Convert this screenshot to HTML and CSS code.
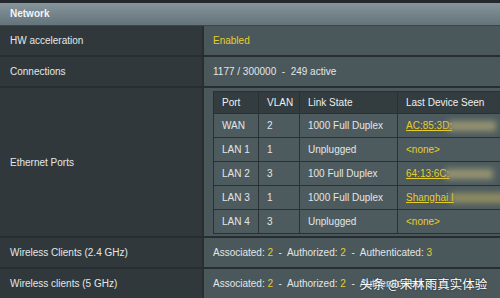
FILE: index.html
```html
<!DOCTYPE html>
<html lang="en">
<head>
    <meta charset="UTF-8">
    <title>Network</title>
    <link rel="stylesheet" href="styles.css">
</head>
<body>
    <div class="panel">
        <div class="top-strip"></div>
        <div class="section-head">Network</div>

        <div class="row">
            <div class="label">HW acceleration</div>
            <div class="value"><span class="hl">Enabled</span></div>
        </div>

        <div class="row">
            <div class="label">Connections</div>
            <div class="value"><span>1177 / 300000 &nbsp;-&nbsp; 249 active</span></div>
        </div>

        <div class="row row-tall">
            <div class="label">Ethernet Ports</div>
            <div class="value value-table">
                <table class="ports">
                    <tr>
                        <th class="c-port">Port</th>
                        <th class="c-vlan">VLAN</th>
                        <th class="c-link">Link State</th>
                        <th class="c-dev">Last Device Seen</th>
                    </tr>
                    <tr>
                        <td>WAN</td><td>2</td><td>1000 Full Duplex</td>
                        <td><a class="dev">AC:85:3D:</a><span class="smear"></span></td>
                    </tr>
                    <tr>
                        <td>LAN 1</td><td>1</td><td>Unplugged</td>
                        <td><span class="hl">&lt;none&gt;</span></td>
                    </tr>
                    <tr>
                        <td>LAN 2</td><td>3</td><td>100 Full Duplex</td>
                        <td><a class="dev">64:13:6C:</a><span class="smear"></span></td>
                    </tr>
                    <tr>
                        <td>LAN 3</td><td>1</td><td>1000 Full Duplex</td>
                        <td><a class="dev">Shanghai I</a><span class="smear smear-long"></span></td>
                    </tr>
                    <tr>
                        <td>LAN 4</td><td>3</td><td>Unplugged</td>
                        <td><span class="hl">&lt;none&gt;</span></td>
                    </tr>
                </table>
            </div>
        </div>

        <div class="row">
            <div class="label">Wireless Clients (2.4 GHz)</div>
            <div class="value"><span>Associated: <span class="hl">2</span> &nbsp;-&nbsp; Authorized: <span class="hl">2</span> &nbsp;-&nbsp; Authenticated: <span class="hl">3</span></span></div>
        </div>

        <div class="row">
            <div class="label">Wireless clients (5 GHz)</div>
            <div class="value"><span>Associated: <span class="hl">2</span> &nbsp;-&nbsp; Authorized: <span class="hl">2</span> &nbsp;-&nbsp; Authenticated: <span class="hl">3</span></span></div>
        </div>

        <div class="watermark">头条 @宋林雨真实体验</div>
    </div>
</body>
</html>
```

FILE: styles.css
```css
body {
    margin: 0;
    width: 500px;
    height: 298px;
    overflow: hidden;
    background-color: #262c2f;
    font-family: "Liberation Sans", Arial, sans-serif;
    font-size: 10px;
    color: #e2e6e6;
}
.panel {
    position: relative;
    width: 500px;
    height: 298px;
    overflow: hidden;
}
.top-strip {
    height: 3px;
    background-color: #23292c;
}
.section-head {
    height: 22px;
    line-height: 22px;
    padding-left: 10px;
    font-weight: bold;
    color: #f2f4f4;
    background: linear-gradient(#86959a, #65747a);
    border-bottom: 1px solid #3b4548;
}
.row {
    display: grid;
    grid-template-columns: 204px 1fr;
    height: 29px;
    border-bottom: 2px solid #272d30;
}
.row-tall {
    height: 148px;
}
.label {
    display: flex;
    align-items: center;
    padding-left: 10px;
    background-color: #30383b;
    border-right: 2px solid #282e31;
    color: #e4e8e8;
}
.value {
    display: flex;
    align-items: center;
    padding-left: 9px;
    background-color: #4a585c;
    white-space: nowrap;
}
.value-table {
    align-items: flex-start;
    padding-top: 3px;
}
.hl {
    color: #e6cd2e;
}
.ports {
    border-collapse: collapse;
    border: 1px solid #252b2e;
    width: 330px;
    table-layout: fixed;
}
.ports th, .ports td {
    text-align: left;
    font-weight: normal;
    padding: 0 0 0 8px;
    border: 1px solid #2a3134;
    white-space: nowrap;
    overflow: hidden;
}
.ports th {
    height: 21px;
    background-color: #333c3f;
    color: #eef0f0;
}
.ports td {
    height: 23px;
    background-color: #4d5b5f;
}
.c-port { width: 36px; }
.c-vlan { width: 32px; }
.c-link { width: 89px; }
.dev {
    color: #e6cd2e;
    text-decoration: underline;
}
.smear {
    display: inline-block;
    vertical-align: middle;
    width: 48px;
    height: 10px;
    margin-left: -4px;
    background-color: rgba(176, 168, 120, 0.75);
    filter: blur(3px);
}
.smear-long {
    width: 80px;
    background-color: rgba(190, 175, 100, 0.6);
}
.watermark {
    position: absolute;
    left: 360px;
    top: 274px;
    font-family: "Noto Sans CJK SC", sans-serif;
    font-size: 12.5px;
    color: #ffffff;
    text-shadow: 0 0 2px rgba(0, 0, 0, 0.6);
    white-space: nowrap;
}
```
